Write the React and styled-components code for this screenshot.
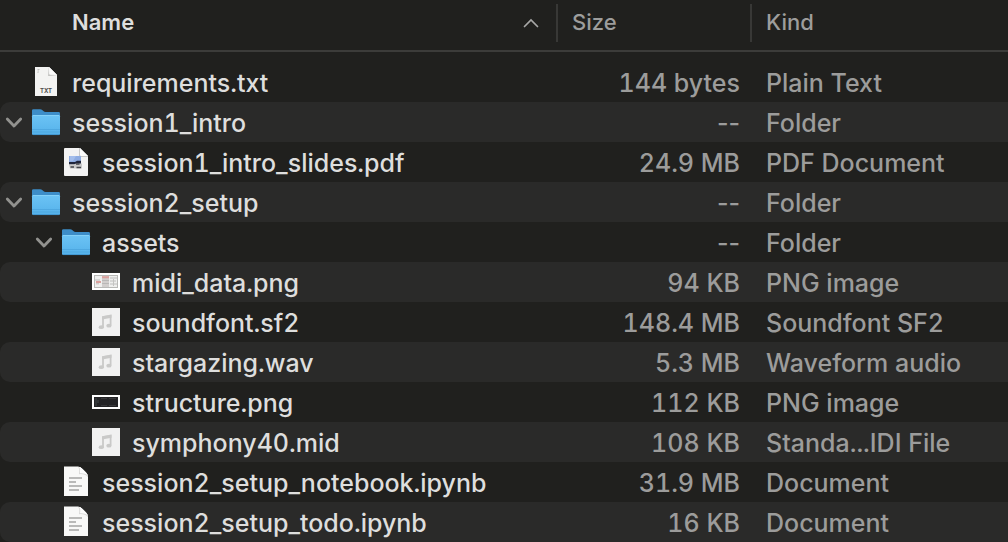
import React, { useState } from "react";
import styled, { createGlobalStyle } from "styled-components";

const GlobalStyle = createGlobalStyle`
  *, *::before, *::after { box-sizing: border-box; }
  body {
    margin: 0;
    background: #20201e;
    color: #dededd;
    font-family: Inter, "Liberation Sans", sans-serif;
  }
`;

const FileTable = styled.table`
  width: 100%;
  table-layout: fixed;
  border-collapse: separate;
  border-spacing: 0;
`;

const NameColumn = styled.col``;
const SizeColumn = styled.col`
  width: 194px;
`;
const KindColumn = styled.col`
  width: 258px;
`;

const HeaderCell = styled.th`
  height: 52px;
  padding: 4px 0 8px;
  border-bottom: 2px solid #3c3c3a;
  text-align: left;
  vertical-align: top;
`;

const HeaderButton = styled.button`
  display: flex;
  align-items: center;
  justify-content: space-between;
  width: 100%;
  height: 38px;
  padding: ${(p) => (p.$main ? "0 16px 2px 72px" : "0 14px 2px")};
  border: 0;
  border-left: ${(p) => (p.$main ? "0" : "2px solid #383836")};
  background: none;
  color: ${(p) => (p.$main ? "#dededd" : "#9d9d9c")};
  font: inherit;
  font-size: 22px;
  font-weight: ${(p) => (p.$main ? 600 : 500)};
  line-height: 28px;
`;

const Rows = styled.tbody`
  &::before {
    content: "";
    display: block;
    height: 10px;
  }
`;

const Row = styled.tr`
  &:nth-child(even) > td {
    background: #2a2a29;
  }
`;

const Cell = styled.td`
  height: 40px;
  padding: 2px 10px 0 16px;
  overflow: hidden;
  color: #9c9c9b;
  font-size: 25px;
  font-weight: 500;
  font-variant-numeric: ${(p) => (p.$blank ? "normal" : "tabular-nums")};
  line-height: 38px;
  text-align: ${(p) => (p.$end ? "right" : "left")};
  white-space: nowrap;
`;

const NameCell = styled(Cell)`
  padding: 0;
  border-radius: 10px 0 0 10px;
  color: #dededd;
`;

const NameLayout = styled.div`
  display: flex;
  align-items: center;
  height: 40px;
  padding-left: ${(p) => p.$level * 30}px;
`;

const FileName = styled.span`
  padding-top: 2px;
`;

const ToggleSlot = styled.span`
  display: flex;
  flex: 0 0 28px;
  justify-content: center;
`;

const Toggle = styled.button`
  display: flex;
  padding: 0;
  border: 0;
  background: none;
`;

const IconSlot = styled.span`
  display: flex;
  flex: 0 0 44px;
  padding-left: 2px;
`;

const Drawing = styled.svg`
  display: block;
  flex: none;
`;

const FolderIcon = () => (
  <Drawing width="32" height="32" viewBox="0 0 32 32" aria-hidden="true">
    <defs>
      <linearGradient id="folderFront" x1="0" y1="0" x2="0" y2="1">
        <stop offset="0" stopColor="#6cc3f4" />
        <stop offset="1" stopColor="#55b2ea" />
      </linearGradient>
    </defs>
    <path d="M2 4.5Q2 3.2 3.4 3.2H10Q11.5 3.2 12.5 4.2L13.6 5.2Q14.4 6 15.6 6H28.6Q30 6 30 7.4V20H2Z" fill="#3d8dc8" />
    <path d="M2 10.2Q2 9 3.2 9H28.8Q30 9 30 10.2V27.8Q30 29 28.8 29H3.2Q2 29 2 27.8Z" fill="url(#folderFront)" />
    <path d="M3 9.5H29" stroke="#83d0f8" />
    <path d="M2 23.5H30M2 26H30" stroke="#4ba4dc" strokeWidth="0.8" />
    <path d="M3 28.6H29" stroke="#3c8fc9" strokeWidth="0.8" />
  </Drawing>
);

const TxtIcon = () => (
  <Drawing width="32" height="32" viewBox="0 0 32 32" aria-hidden="true">
    <defs>
      <linearGradient id="foldShade" x1="0" y1="1" x2="0.6" y2="0.4">
        <stop offset="0" stopColor="#b9b9b7" />
        <stop offset="1" stopColor="#f4f4f3" />
      </linearGradient>
    </defs>
    <path d="M5 1H19L27 9V30H5Z" fill="#f3f3f2" />
    <path d="M7.5 3.5H9.5M7.5 5H9M7.5 6.5H8.5" stroke="#b5b5b3" strokeWidth="0.8" />
    <path d="M18.2 1V10H27V9L19 1Z" fill="url(#foldShade)" />
    <path d="M19.2 1.2V7.6Q19.2 8.8 20.4 8.8H26.8Z" fill="#fbfbfb" />
    <text x="16" y="27" textAnchor="middle" fontFamily="Inter, sans-serif" fontSize="6" fontWeight="700" fill="#50504e">TXT</text>
  </Drawing>
);

const DocumentIcon = () => (
  <Drawing width="32" height="32" viewBox="0 0 32 32" aria-hidden="true">
    <path d="M4 0.5H17.5Q20.5 0.5 22.5 3L26 6.5Q28 8.5 28 11V30H4Z" fill="#f8f8f7" />
    <path d="M17.5 0.5Q20.2 2 19 8.2Q25 7.6 28 11Q28 8.5 26 6.5L22.5 3Q20.5 0.5 17.5 0.5Z" fill="#d6d6d5" />
    <path d="M19 0.8Q20.8 3 20 7.2Q24.5 6.8 27.5 9Q27 7.5 26 6.5L22.5 3Q21 1.2 19 0.8Z" fill="#fdfdfd" />
    <path d="M9 12H22M9 16H16M9 20H22M9 24H19" stroke="#b9b9b8" strokeWidth="1.8" />
  </Drawing>
);

const PdfIcon = () => (
  <Drawing width="32" height="32" viewBox="0 0 32 32" aria-hidden="true">
    <path d="M5 2H20L28 10V29Q28 30 27 30H5Q4 30 4 29V3Q4 2 5 2Z" fill="#f3f3f3" />
    <path d="M19 2V11H28V10L20 2Z" fill="#c9c9c8" />
    <path d="M20 2.2V8.8Q20 10 21.2 10H27.8Z" fill="#fdfdfd" />
    <rect x="9" y="10" width="12" height="7" fill="#8eace2" />
    <path d="M10 10H16L13 15H10Z" fill="#a3bdeb" />
    <path d="M9 16H15L17 14.8H21V18.6H9Z" fill="#20263c" />
    <path d="M9 18.5H14L16 17.5H22V22.5H10Z" fill="#c9c9c9" />
    <path d="M10.5 21H14M16 18H19.5M16.5 21.5H21" stroke="#44464c" strokeWidth="1.3" />
  </Drawing>
);

const AudioIcon = () => (
  <Drawing width="32" height="32" viewBox="0 0 32 32" aria-hidden="true">
    <rect x="2" y="2" width="28" height="28" fill="#f1f1f1" />
    <path d="M13 21V11L20.6 9.6V19.5" fill="none" stroke="#c9c9c8" strokeWidth="1.8" />
    <path d="M12.1 10.4L21.5 8.8V11.8L12.1 13.6Z" fill="#c9c9c8" />
    <ellipse cx="11.3" cy="21.2" rx="2.6" ry="1.9" fill="#c9c9c8" />
    <ellipse cx="18.9" cy="19.7" rx="2.6" ry="1.9" fill="#c9c9c8" />
  </Drawing>
);

const DiagramIcon = () => (
  <Drawing width="32" height="32" viewBox="0 0 32 32" aria-hidden="true">
    <rect x="2" y="7" width="28" height="17" fill="#fff" />
    <rect x="4.5" y="9.5" width="23" height="12" fill="#efefee" stroke="#b9b9b7" />
    <rect x="12" y="10" width="7" height="11" fill="#d2cecd" />
    <path d="M12 11.2H19M6 16H11" stroke="#dba19d" strokeWidth="2" />
    <path d="M5 14H10M6 17.8H9M20 12H27M20 15H26M20 18H27M12 14.5H19M12 17.5H19" stroke="#b4b3b1" strokeWidth="0.8" />
    <path d="M23.5 13V20" stroke="#c4c4c2" />
  </Drawing>
);

const DarkImageIcon = () => (
  <Drawing width="32" height="32" viewBox="0 0 32 32" aria-hidden="true">
    <rect x="2" y="9" width="28" height="14" fill="#fff" />
    <rect x="4" y="11" width="24" height="10" fill="#242426" />
    <path d="M6 12V20M8 14V17" stroke="#42484b" />
    <path d="M11 12.5H17M19 12.5H26M11 19.5H17M19 19.5H26" stroke="#39393b" />
  </Drawing>
);

const icons = {
  txt: TxtIcon,
  folder: FolderIcon,
  pdf: PdfIcon,
  diagram: DiagramIcon,
  audio: AudioIcon,
  dark: DarkImageIcon,
  document: DocumentIcon,
};

const files = [
  { name: "requirements.txt", size: "144 bytes", kind: "Plain Text", icon: "txt", level: 0 },
  { name: "session1_intro", size: "--", kind: "Folder", icon: "folder", level: 0 },
  { name: "session1_intro_slides.pdf", size: "24.9 MB", kind: "PDF Document", icon: "pdf", level: 1, parents: ["session1_intro"] },
  { name: "session2_setup", size: "--", kind: "Folder", icon: "folder", level: 0 },
  { name: "assets", size: "--", kind: "Folder", icon: "folder", level: 1, parents: ["session2_setup"] },
  { name: "midi_data.png", size: "94 KB", kind: "PNG image", icon: "diagram", level: 2, parents: ["session2_setup", "assets"] },
  { name: "soundfont.sf2", size: "148.4 MB", kind: "Soundfont SF2", icon: "audio", level: 2, parents: ["session2_setup", "assets"] },
  { name: "stargazing.wav", size: "5.3 MB", kind: "Waveform audio", icon: "audio", level: 2, parents: ["session2_setup", "assets"] },
  { name: "structure.png", size: "112 KB", kind: "PNG image", icon: "dark", level: 2, parents: ["session2_setup", "assets"] },
  { name: "symphony40.mid", size: "108 KB", kind: "Standa...IDI File", icon: "audio", level: 2, parents: ["session2_setup", "assets"] },
  { name: "session2_setup_notebook.ipynb", size: "31.9 MB", kind: "Document", icon: "document", level: 1, parents: ["session2_setup"] },
  { name: "session2_setup_todo.ipynb", size: "16 KB", kind: "Document", icon: "document", level: 1, parents: ["session2_setup"] },
];

export default function App() {
  const [closed, setClosed] = useState([]);
  const toggle = (name) =>
    setClosed((list) => (list.includes(name) ? list.filter((n) => n !== name) : [...list, name]));
  const visible = files.filter((f) => !(f.parents || []).some((p) => closed.includes(p)));

  return (
    <>
      <GlobalStyle />
      <FileTable>
        <colgroup>
          <NameColumn />
          <SizeColumn />
          <KindColumn />
        </colgroup>
        <thead>
          <tr>
            <HeaderCell scope="col" aria-sort="ascending">
              <HeaderButton type="button" $main>
                Name
                <Drawing width="18" height="12" viewBox="0 0 18 12" aria-hidden="true">
                  <path d="M2.5 10.5L9 4L15.5 10.5" fill="none" stroke="#a8a8a7" strokeWidth="1.7" strokeLinecap="round" />
                </Drawing>
              </HeaderButton>
            </HeaderCell>
            <HeaderCell scope="col">
              <HeaderButton type="button">Size</HeaderButton>
            </HeaderCell>
            <HeaderCell scope="col">
              <HeaderButton type="button">Kind</HeaderButton>
            </HeaderCell>
          </tr>
        </thead>
        <Rows>
          {visible.map((file) => {
            const Icon = icons[file.icon];
            const open = !closed.includes(file.name);
            return (
              <Row key={file.name}>
                <NameCell>
                  <NameLayout $level={file.level}>
                    <ToggleSlot>
                      {file.icon === "folder" && (
                        <Toggle type="button" aria-label={file.name} aria-expanded={open} onClick={() => toggle(file.name)}>
                          <Drawing width="18" height="12" viewBox="0 0 18 12" aria-hidden="true">
                            <path d={open ? "M2.3 3L9 10L15.7 3" : "M6 0L12 6L6 12"} fill="none" stroke="#92928f" strokeWidth="2.8" strokeLinecap="round" strokeLinejoin="round" />
                          </Drawing>
                        </Toggle>
                      )}
                    </ToggleSlot>
                    <IconSlot>
                      <Icon />
                    </IconSlot>
                    <FileName>{file.name}</FileName>
                  </NameLayout>
                </NameCell>
                <Cell $end $blank={file.icon === "folder"}>{file.size}</Cell>
                <Cell>{file.kind}</Cell>
              </Row>
            );
          })}
        </Rows>
      </FileTable>
    </>
  );
}
